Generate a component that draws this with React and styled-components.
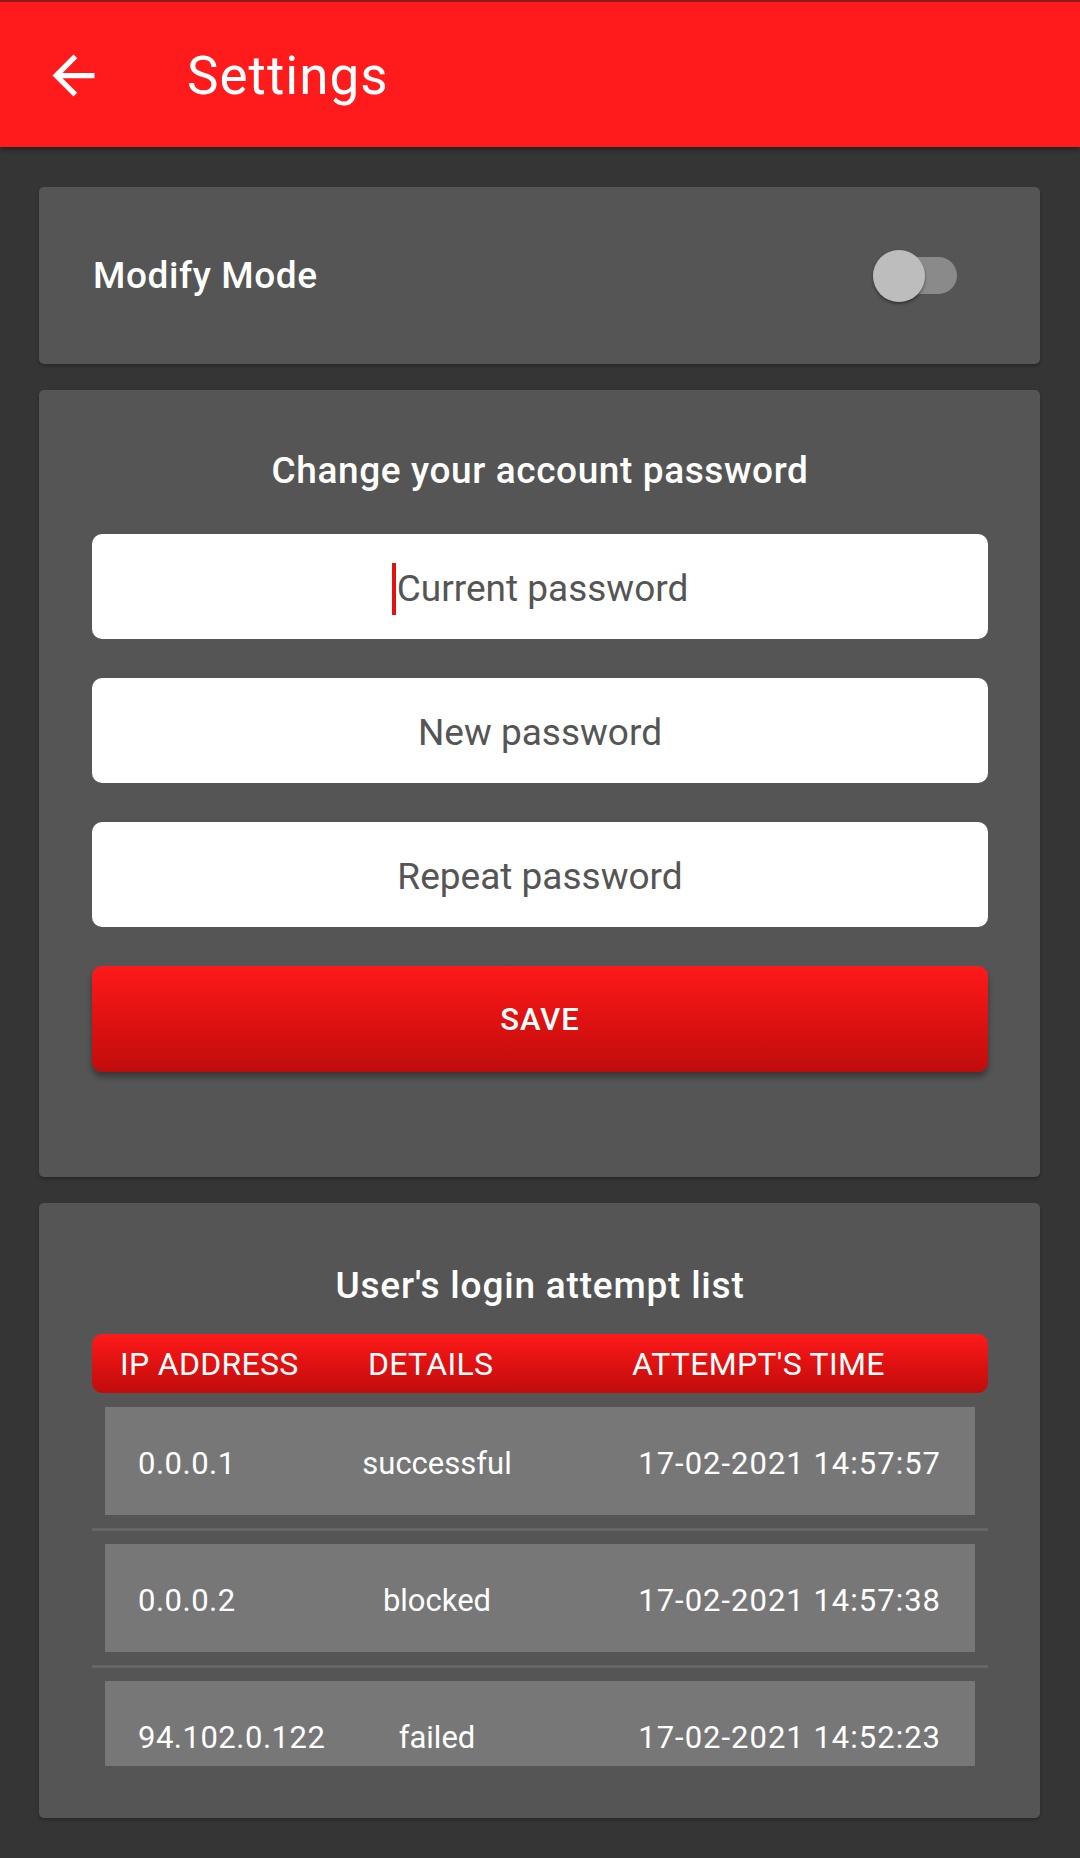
import styled, { createGlobalStyle } from 'styled-components';

const GlobalStyle = createGlobalStyle`
  * { box-sizing: border-box; }
  body {
    margin: 0;
    background: #353535;
    font-family: Roboto, 'Liberation Sans', sans-serif;
  }
`;

const Toolbar = styled.header`
  height: 147px;
  border-top: 2px solid #8c1c1c;
  background: #ff1b1b;
  display: flex;
  align-items: center;
  padding: 2px 0 0 42px;
  box-shadow: 0 2px 6px rgba(0, 0, 0, 0.45);
  position: relative;
  z-index: 1;
`;

const BackIcon = styled.svg`
  width: 63px;
  height: 63px;
  flex-shrink: 0;
`;

const Title = styled.h1`
  margin: 0 0 0 82px;
  font-size: 53px;
  font-weight: 400;
  letter-spacing: 1px;
  color: #ffffff;
`;

const Main = styled.main`
  display: flex;
  flex-direction: column;
  gap: 26px;
  padding: 40px 40px 40px 39px;
`;

const Card = styled.section`
  background: #555555;
  border-radius: 5px;
  box-shadow: 0 2px 3px rgba(0, 0, 0, 0.25);
`;

const ModeCard = styled(Card)`
  height: 177px;
  display: flex;
  align-items: center;
  justify-content: space-between;
  padding: 0 83px 0 54px;
`;

const Label = styled.span`
  font-size: 37px;
  font-weight: 500;
  letter-spacing: 0.6px;
  color: #ffffff;
`;

const Track = styled.div`
  width: 84px;
  height: 37px;
  border-radius: 19px;
  background: #8a8a8a;
  display: flex;
  align-items: center;
`;

const Thumb = styled.div`
  width: 52px;
  height: 52px;
  flex-shrink: 0;
  border-radius: 50%;
  background: #bdbdbd;
  box-shadow: 0 2px 3px rgba(0, 0, 0, 0.4);
`;

const FormCard = styled(Card)`
  display: flex;
  flex-direction: column;
  padding: ${(p) => p.$top}px 52px ${(p) => p.$bottom}px 53px;
`;

const SectionTitle = styled.h2`
  margin: 0 0 ${(p) => p.$gap}px;
  text-align: center;
  font-size: 37px;
  line-height: 44px;
  font-weight: 500;
  letter-spacing: ${(p) => p.$spacing}px;
  color: #ffffff;
`;

const Fields = styled.div`
  display: flex;
  flex-direction: column;
  gap: 39px;
`;

const Field = styled.div`
  height: 105px;
  background: #ffffff;
  border-radius: 10px;
  display: flex;
  align-items: center;
  justify-content: center;
  padding-top: 4px;
  font-size: 37px;
  color: #555555;
`;

const Caret = styled.span`
  width: 4px;
  height: 52px;
  margin-right: 1px;
  background: #e01212;
`;

const redGradient = `linear-gradient(180deg, #fe1a1a 0%, #e31212 45%, #c00c0c 100%)`;

const SaveButton = styled.button`
  height: 106px;
  border: none;
  border-radius: 10px;
  background: ${redGradient};
  box-shadow: 0 5px 6px rgba(0, 0, 0, 0.35);
  color: #ffffff;
  font-family: inherit;
  font-size: 31px;
  font-weight: 500;
  letter-spacing: 1px;
`;

const TableHead = styled.div`
  height: 59px;
  border-radius: 10px;
  background: ${redGradient};
  display: grid;
  grid-template-columns: 248px 264px 1fr;
  align-items: center;
  padding-left: 28px;
  font-size: 32px;
  letter-spacing: 0.3px;
  color: #ffffff;
`;

const List = styled.div`
  height: 373px;
  padding-top: 14px;
  overflow: hidden;
`;

const Row = styled.div`
  height: 108px;
  margin: 0 13px;
  background: #777777;
  display: grid;
  grid-template-columns: 199px 200px 1fr;
  align-items: center;
  padding: 4px 34px 0 33px;
  font-size: 31px;
  color: #ffffff;
`;

const Cell = styled.span`
  text-align: ${(p) => p.$align || 'left'};
  letter-spacing: ${(p) => p.$spacing || 0}px;
  white-space: nowrap;
`;

const Divider = styled.div`
  height: 3px;
  margin: 13px 0;
  background: #666666;
`;

const attempts = [
  { ip: '0.0.0.1', details: 'successful', time: '17-02-2021 14:57:57' },
  { ip: '0.0.0.2', details: 'blocked', time: '17-02-2021 14:57:38' },
  { ip: '94.102.0.122', details: 'failed', time: '17-02-2021 14:52:23' },
];

export default function App() {
  return (
    <>
      <GlobalStyle />
      <Toolbar>
        <BackIcon viewBox="0 0 24 24">
          <path fill="#ffffff" d="M20 11H7.83l5.59-5.59L12 4l-8 8 8 8 1.41-1.41L7.83 13H20v-2z" />
        </BackIcon>
        <Title>Settings</Title>
      </Toolbar>

      <Main>
        <ModeCard>
          <Label>Modify Mode</Label>
          <Track>
            <Thumb />
          </Track>
        </ModeCard>

        <FormCard $top={59} $bottom={105}>
          <SectionTitle $gap={41} $spacing={0.6}>Change your account password</SectionTitle>
          <Fields>
            <Field>
              <Caret />
              Current password
            </Field>
            <Field>New password</Field>
            <Field>Repeat password</Field>
            <SaveButton>SAVE</SaveButton>
          </Fields>
        </FormCard>

        <FormCard $top={61} $bottom={52}>
          <SectionTitle $gap={26} $spacing={0.8}>User's login attempt list</SectionTitle>
          <TableHead>
            <span>IP ADDRESS</span>
            <span>DETAILS</span>
            <span>ATTEMPT'S TIME</span>
          </TableHead>
          <List>
            {attempts.map((a) => (
              <div key={a.ip}>
                <Row>
                  <Cell $spacing={0.5}>{a.ip}</Cell>
                  <Cell $align="center">{a.details}</Cell>
                  <Cell $align="right" $spacing={1}>{a.time}</Cell>
                </Row>
                <Divider />
              </div>
            ))}
          </List>
        </FormCard>
      </Main>
    </>
  );
}
